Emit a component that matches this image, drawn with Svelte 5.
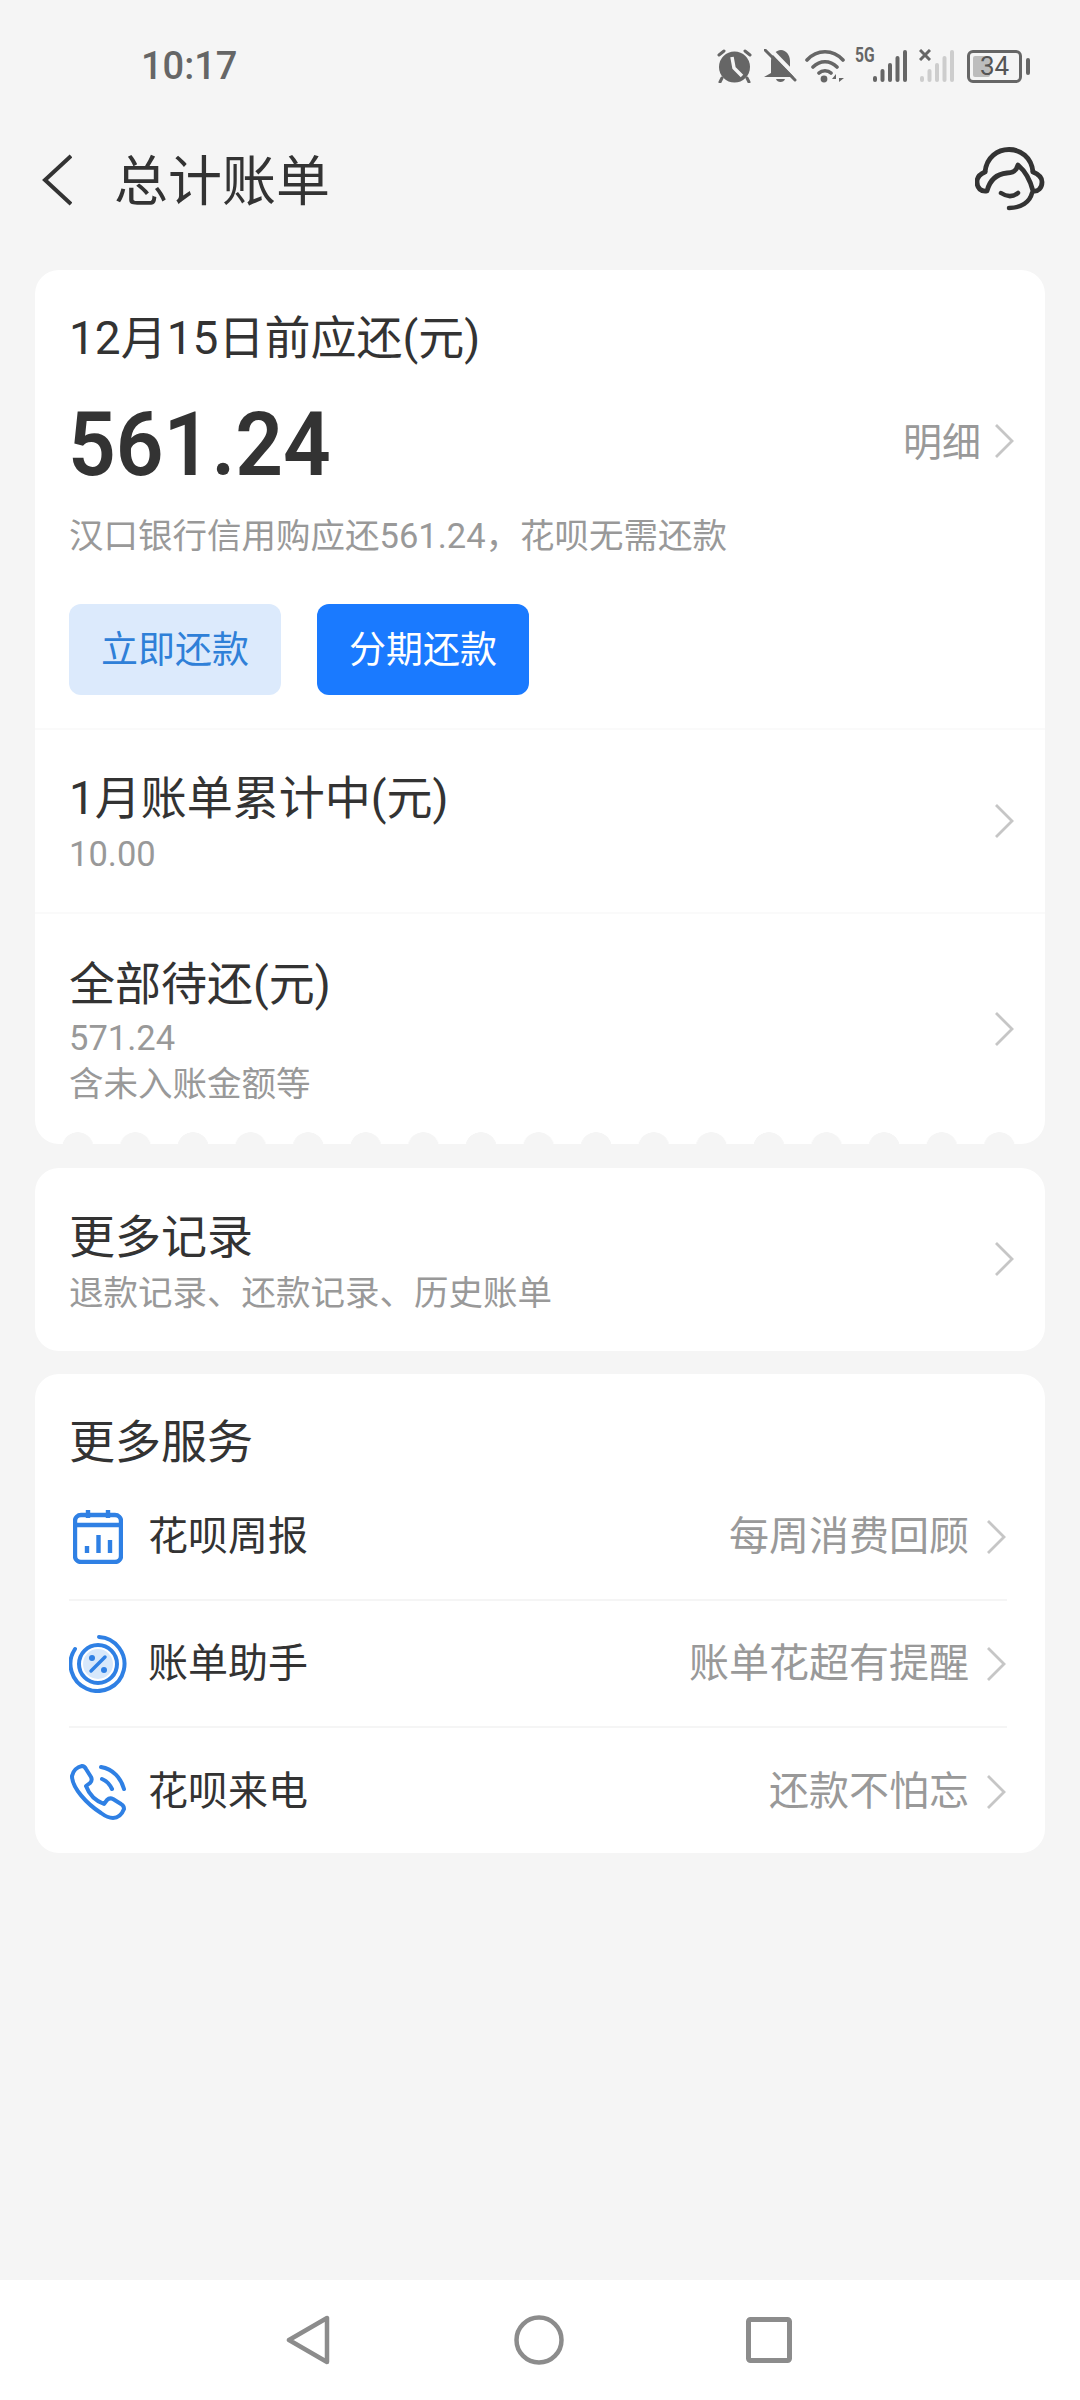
<script>
  const services = [
    { icon: "calendar", name: "花呗周报", note: "每周消费回顾" },
    { icon: "percent", name: "账单助手", note: "账单花超有提醒" },
    { icon: "phone", name: "花呗来电", note: "还款不怕忘" }
  ];
  // signal strength bars, tallest last
  const bars = [
    { x: 1, y: 27 },
    { x: 8.5, y: 20 },
    { x: 16, y: 14 },
    { x: 23.5, y: 7 },
    { x: 31, y: 1 }
  ];
</script>

{#snippet chevron()}
  <svg class="chevron" viewBox="0 0 22 36" width="22" height="36">
    <path d="M3 2 L19 18 L3 34" fill="none" stroke="#c6c6c6" stroke-width="2.8" />
  </svg>
{/snippet}

{#snippet signal(color)}
  <svg viewBox="0 0 35 34" width="35" height="34">
    {#each bars as b}
      <rect x={b.x} y={b.y} width="4" height={33 - b.y} rx="2" fill={color} />
    {/each}
  </svg>
{/snippet}

<div class="page">
  <div class="status">
    <span class="time">10:17</span>
    <div class="status-icons">
      <svg class="ic-alarm" viewBox="0 0 35 34" width="35" height="34">
        <circle cx="17.5" cy="18" r="15.5" fill="#666" />
        <path d="M15 8 L17 19 L25 27" fill="none" stroke="#f5f5f5" stroke-width="3.5" />
        <path d="M2 6 L7 2 M33 6 L28 2 M5 29 L3 33 M30 29 L32 33" stroke="#666" stroke-width="3" stroke-linecap="round" />
      </svg>
      <svg class="ic-bell" viewBox="0 0 33 34" width="33" height="34">
        <path d="M0 28 H30 L26 22 V12 C26 6 22 1 17 1 C12 1 7 6 7 12 V24 Z" fill="#666" />
        <path d="M12 30 H21 C20 34 13 34 12 30 Z" fill="#666" />
        <path d="M4 -2 L33 28" stroke="#f5f5f5" stroke-width="4" />
        <path d="M1 1 L31 31" stroke="#666" stroke-width="3" stroke-linecap="round" />
      </svg>
      <svg class="ic-wifi" viewBox="0 0 40 34" width="40" height="34">
        <path d="M2 11 C12 0 28 0 38 11 M8 18 C15 11 25 11 32 18 M14 24 C17 21 23 21 26 24" fill="none" stroke="#666" stroke-width="3.6" stroke-linecap="round" />
        <circle cx="19" cy="30" r="3.4" fill="#666" />
        <path d="M31 25 L27 30 H31 Z M34 25 V33 L39 29 H34 Z" fill="#666" />
      </svg>
      <div class="net">
        <span class="five-g">5G</span>
        {@render signal("#666")}
      </div>
      <div class="net second">
        <svg class="cross" viewBox="0 0 12 12" width="12" height="12">
          <path d="M1 1 L11 11 M11 1 L1 11" stroke="#666" stroke-width="3" />
        </svg>
        {@render signal("#cdcdcd")}
      </div>
      <div class="battery">
        <div class="battery-fill"></div>
        <span class="battery-num">34</span>
      </div>
      <div class="battery-tip"></div>
    </div>
  </div>

  <header class="top">
    <svg class="back" viewBox="0 0 30 52" width="30" height="52">
      <path d="M29 2 L3 26 L29 50" fill="none" stroke="#333" stroke-width="4" />
    </svg>
    <h1>总计账单</h1>
    <svg class="headset" viewBox="0 0 70 66" width="70" height="66">
      <path d="M10 25 C13 -5 55 -5 58 25" fill="none" stroke="#333" stroke-width="4.8" />
      <path d="M10 25 C5 27 2 30 2 35 C2 41 6 45 12 44 C15 32 22 27 32 26 C37 26 41 25 43 18 C50 24 55 32 58 44 C63 45 67 41 67 35 C67 30 63 27 58 25" fill="none" stroke="#333" stroke-width="4.8" stroke-linecap="round" stroke-linejoin="round" />
      <path d="M26 46 C32 50 38 50 43 46" fill="none" stroke="#333" stroke-width="4.5" stroke-linecap="round" />
      <path d="M57 46 C55 55 46 61 34 61" fill="none" stroke="#333" stroke-width="4.5" stroke-linecap="round" />
    </svg>
  </header>

  <section class="card bill">
    <div class="due">
      <div class="due-title">12月15日前应还(元)</div>
      <div class="amount-row">
        <span class="amount">561.24</span>
        <span class="detail"><span class="detail-text">明细</span>{@render chevron()}</span>
      </div>
      <div class="due-sub">汉口银行信用购应还561.24，花呗无需还款</div>
      <div class="buttons">
        <button class="btn light"><span>立即还款</span></button>
        <button class="btn solid"><span>分期还款</span></button>
      </div>
    </div>
    <div class="row month">
      <div>
        <div class="row-title">1月账单累计中(元)</div>
        <div class="row-sub">10.00</div>
      </div>
      {@render chevron()}
    </div>
    <div class="row total">
      <div>
        <div class="row-title">全部待还(元)</div>
        <div class="row-sub">571.24</div>
        <div class="row-sub">含未入账金额等</div>
      </div>
      {@render chevron()}
    </div>
    <div class="scallop"></div>
  </section>

  <section class="card row more">
    <div>
      <div class="row-title">更多记录</div>
      <div class="row-sub">退款记录、还款记录、历史账单</div>
    </div>
    {@render chevron()}
  </section>

  <section class="card services">
    <div class="row-title services-title">更多服务</div>
    {#each services as s}
      <div class="service">
        <div class="service-icon">
          {#if s.icon === "calendar"}
            <svg class="ic-calendar" viewBox="0 0 50 54" width="50" height="54">
              <rect x="2" y="5" width="46" height="47" rx="6" fill="none" stroke="#2f80e4" stroke-width="4.4" />
              <path d="M2 15 H48 M15 0 V8 M35 0 V8" stroke="#2f80e4" stroke-width="4.4" />
              <path d="M14 36 V43 M25.5 25 V43 M37 30 V43" stroke="#2f80e4" stroke-width="4.4" />
            </svg>
          {:else if s.icon === "percent"}
            <svg class="ic-percent" viewBox="0 0 58 58" width="58" height="58">
              <path d="M30 2 A27 27 0 1 1 6 14" fill="none" stroke="#2f80e4" stroke-width="4" stroke-linecap="round" />
              <circle cx="29" cy="29" r="19" fill="none" stroke="#2f80e4" stroke-width="4" />
              <circle cx="29" cy="29" r="15" fill="#d7e8fb" />
              <path d="M36 22 L22 36" stroke="#2f80e4" stroke-width="3.5" stroke-linecap="round" />
              <circle cx="23" cy="23" r="3" fill="#2f80e4" />
              <circle cx="35" cy="35" r="3" fill="#2f80e4" />
            </svg>
          {:else}
            <svg class="ic-phone" viewBox="0 0 56 56" width="56" height="56">
              <path d="M2 12 C3 7 7 3 12 2 C14 2 15 3 16 5 L21 13 C22 15 22 17 20 19 L16 22 C19 30 26 37 34 40 L37 36 C39 34 41 34 43 35 L51 40 C53 41 54 43 54 45 C52 50 48 54 43 54 C39 54 35 52 31 49 C17 40 2 24 2 12 Z" fill="none" stroke="#2f80e4" stroke-width="4" stroke-linejoin="round" />
              <path d="M31 3 C43 5 51 14 54 25 M32 15 C37 17 40 21 42 25" fill="none" stroke="#2f80e4" stroke-width="4" stroke-linecap="round" />
            </svg>
          {/if}
        </div>
        <span class="service-name">{s.name}</span>
        <span class="service-note">{s.note}</span>
        {@render chevron()}
      </div>
    {/each}
  </section>

  <div class="spacer"></div>

  <nav class="nav">
    <svg viewBox="0 0 46 50" width="46" height="50">
      <path d="M3 25 L41 3 V47 Z" fill="none" stroke="#8c8c8c" stroke-width="4.5" stroke-linejoin="round" />
    </svg>
    <svg viewBox="0 0 50 50" width="50" height="50">
      <circle cx="25" cy="25" r="22.5" fill="none" stroke="#8c8c8c" stroke-width="4.5" />
    </svg>
    <svg viewBox="0 0 46 46" width="46" height="46">
      <rect x="2.5" y="2.5" width="41" height="41" rx="2" fill="none" stroke="#8c8c8c" stroke-width="5" />
    </svg>
  </nav>
</div>

<style>
  :global(body) {
    margin: 0;
    background: #f5f5f5;
  }

  .page {
    width: 1080px;
    height: 2400px;
    display: flex;
    flex-direction: column;
    background: #f5f5f5;
    color: #333;
    font-family: Roboto, "Noto Sans CJK SC", sans-serif;
  }

  .status {
    height: 132px;
    flex: none;
    display: flex;
    align-items: center;
    justify-content: space-between;
    padding: 0 50px 0 141px;
    box-sizing: border-box;
  }

  .time {
    font-size: 38px;
    font-weight: 500;
    color: #666;
  }

  .status-icons {
    display: flex;
    align-items: center;
  }

  .ic-bell {
    margin-left: 12px;
    overflow: hidden;
  }

  .ic-wifi {
    margin-left: 8px;
  }

  .net {
    position: relative;
    display: flex;
    margin-left: 10px;
  }

  .net.second {
    margin-left: 12px;
  }

  .five-g {
    width: 17px;
    font-size: 20px;
    font-weight: 700;
    color: #666;
    line-height: 14px;
    transform: scaleX(0.78);
    transform-origin: left top;
    margin-top: -1px;
  }

  .cross {
    position: absolute;
    left: 0;
    top: 0;
  }

  .battery {
    position: relative;
    width: 55px;
    height: 33px;
    box-sizing: border-box;
    border: 3px solid #666;
    border-radius: 6px;
    margin-left: 13px;
    display: flex;
    align-items: center;
    justify-content: center;
  }

  .battery-fill {
    position: absolute;
    left: 3px;
    top: 3px;
    bottom: 3px;
    width: 17px;
    background: #bdbdbd;
    border-radius: 2px;
  }

  .battery-num {
    position: relative;
    font-size: 26px;
    line-height: 27px;
    color: #555;
  }

  .battery-tip {
    width: 4px;
    height: 17px;
    background: #666;
    border-radius: 2px;
    margin-left: 4px;
  }

  .top {
    height: 96px;
    flex: none;
    display: flex;
    align-items: center;
    padding: 0 35px 0 42px;
    margin-bottom: 42px;
  }

  .back {
    margin-right: 42px;
  }

  h1 {
    margin: 0 0 6px;
    flex: 1;
    font-size: 54px;
    font-weight: 400;
    color: #333;
  }

  .card {
    margin: 0 35px;
    background: #fff;
    border-radius: 24px;
    flex: none;
  }

  .bill {
    position: relative;
    overflow: hidden;
    margin-bottom: 24px;
  }

  .due {
    padding: 40px 30px 33px 34px;
    border-bottom: 2px solid #fafafa;
  }

  .due-title {
    font-size: 46px;
    line-height: 56px;
  }

  .amount-row {
    display: flex;
    align-items: center;
    justify-content: space-between;
    margin-top: 29px;
    height: 100px;
  }

  .amount {
    font-size: 89px;
    font-weight: 600;
    line-height: 100px;
    margin-left: -1px;
    transform: scaleX(0.94);
    transform-origin: left center;
  }

  .detail {
    display: flex;
    align-items: center;
    gap: 12px;
    font-size: 39px;
    color: #999;
    margin-bottom: 8px;
  }

  .detail-text {
    padding-bottom: 4px;
  }

  .due-sub {
    margin-top: 19px;
    font-size: 34.5px;
    line-height: 44px;
    color: #999;
  }

  .buttons {
    display: flex;
    gap: 36px;
    margin-top: 46px;
  }

  .btn {
    width: 212px;
    height: 91px;
    border: none;
    border-radius: 12px;
    font-family: inherit;
    font-size: 37px;
    padding: 0 0 5px;
  }

  .light {
    background: #dceafc;
    color: #2f80d8;
  }

  .solid {
    background: #1a7aff;
    color: #fff;
  }

  .row {
    display: flex;
    align-items: center;
    justify-content: space-between;
    padding: 5px 30px 0 34px;
    box-sizing: border-box;
  }

  .row .chevron {
    margin-top: -6px;
  }

  .month {
    height: 184px;
    border-bottom: 2px solid #fafafa;
  }

  .total {
    height: 230px;
  }

  .row-title {
    font-size: 46px;
    line-height: 56px;
  }

  .row-sub {
    font-size: 34.5px;
    line-height: 46px;
    color: #999;
  }

  .row-title + .row-sub {
    margin-top: 5px;
  }

  .total .row-title + .row-sub {
    margin-top: 3px;
  }

  .scallop {
    position: absolute;
    left: 0;
    right: 28px;
    bottom: 0;
    height: 12px;
    background: radial-gradient(circle 16px at 50% 16px, #f5f5f5 97%, transparent 100%) 14px 0 / 57.6px 12px repeat-x;
  }

  .more {
    height: 183px;
    margin-bottom: 23px;
  }

  .services {
    padding: 40px 38px 0 34px;
    height: 479px;
    box-sizing: border-box;
  }

  .services-title {
    margin-bottom: 4px;
  }

  .service {
    height: 127px;
    display: flex;
    align-items: center;
    border-bottom: 2px solid #f5f5f5;
    box-sizing: border-box;
  }

  .service:last-child {
    border-bottom: none;
  }

  .service-icon {
    width: 79px;
    display: flex;
  }

  .ic-calendar {
    margin-left: 4px;
  }

  .ic-phone {
    margin-left: 1px;
  }

  .service-name {
    flex: 1;
    font-size: 40px;
    padding-bottom: 7px;
  }

  .service-note {
    font-size: 40px;
    color: #999;
    margin-right: 16px;
    padding-bottom: 7px;
  }

  .spacer {
    flex: 1;
  }

  .nav {
    height: 120px;
    flex: none;
    background: #fff;
    display: flex;
    align-items: center;
    padding: 0 0 0 286px;
    gap: 182px;
  }
</style>
